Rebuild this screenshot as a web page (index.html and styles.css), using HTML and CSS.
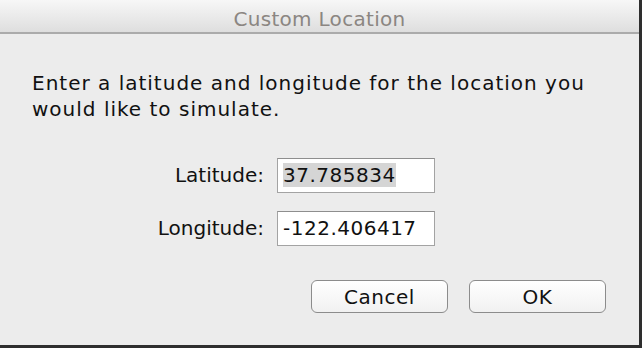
FILE: index.html
```html
<!DOCTYPE html>
<html>
<head>
    <meta charset="UTF-8">
    <title>Custom Location</title>
    <link rel="stylesheet" href="styles.css">
</head>
<body>
    <div class="window">
        <div class="titlebar">Custom Location</div>
        <div class="content">
            <p class="message">Enter a latitude and longitude for the location you would like to simulate.</p>

            <div class="form-grid">
                <label class="field-label">Latitude:</label>
                <div class="field"><span class="selected">37.785834</span></div>

                <label class="field-label">Longitude:</label>
                <div class="field">-122.406417</div>
            </div>

            <div class="buttons">
                <button class="btn">Cancel</button>
                <button class="btn">OK</button>
            </div>
        </div>
    </div>
</body>
</html>
```

FILE: styles.css
```css
body {
    margin: 0;
    background-color: #ffffff;
    font-family: 'DejaVu Sans', 'Liberation Sans', sans-serif;
}

.window {
    width: 639px;
    height: 345px;
    background-color: #ececec;
    border-right: 3px solid #2e2e2e;
    border-bottom: 3px solid #2e2e2e;
    display: flex;
    flex-direction: column;
}

.titlebar {
    height: 26px;
    padding-top: 6px;
    line-height: 26px;
    text-align: center;
    font-size: 20px;
    letter-spacing: 0.3px;
    color: #8b8682;
    background-image: linear-gradient(#f7f7f7, #dedede);
    border-bottom: 2px solid #ababab;
}

.content {
    padding: 36px 33px 0 32px;
}

.message {
    margin: 0;
    font-size: 20px;
    line-height: 26px;
    letter-spacing: 1px;
    color: #111111;
}

.form-grid {
    display: grid;
    grid-template-columns: 232px 158px;
    grid-auto-rows: 35px;
    column-gap: 13px;
    row-gap: 18px;
    margin-top: 36px;
}

.field-label {
    text-align: right;
    font-size: 20px;
    line-height: 35px;
    color: #111111;
}

.field {
    box-sizing: border-box;
    background-color: #ffffff;
    border: 1px solid #a3a3a3;
    border-top-color: #8e8e8e;
    padding: 4px 5px;
    font-size: 20px;
    line-height: 25px;
    letter-spacing: 0.5px;
    color: #111111;
    white-space: nowrap;
}

.selected {
    background-color: #d5d5d5;
}

.buttons {
    display: flex;
    justify-content: flex-end;
    gap: 21px;
    margin-top: 34px;
}

.btn {
    width: 137px;
    height: 33px;
    border: 1px solid #8c8c8c;
    border-radius: 6px;
    background-image: linear-gradient(#ffffff, #f1f1f1);
    font-family: 'DejaVu Sans', 'Liberation Sans', sans-serif;
    font-size: 20px;
    letter-spacing: 0.5px;
    color: #111111;
    padding: 0;
}
```
